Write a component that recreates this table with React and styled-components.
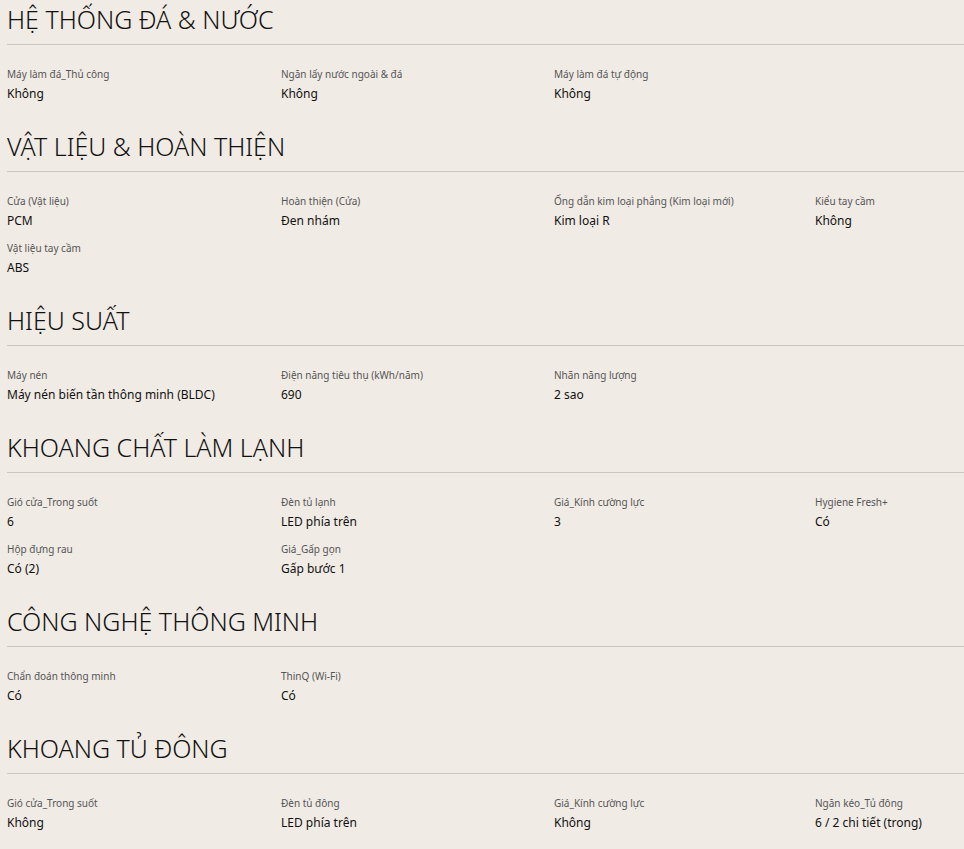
import React from "react"
import styled, { createGlobalStyle } from "styled-components"

const GlobalStyle = createGlobalStyle`
  html, body {
    margin: 0;
    padding: 0;
    background: #f0ebe5;
  }
  body {
    font-family: "Noto Sans", "Open Sans", sans-serif;
    color: #111;
  }`;

const Page = styled("div")`
  padding: 3px 0 20px 7px;
  background: #f0ebe5;
  min-height: 849px;
  box-sizing: border-box;`;

const Section = styled("section")`
  & + & {
    margin-top: 26px;
  }`;

const Title = styled("h2")`
  margin: 0;
  padding-bottom: 9px;
  border-bottom: 1px solid #c9c5c0;
  font-size: 25px;
  line-height: 32px;
  font-weight: 350;
  color: #111;`;

const Grid = styled("div")`
  display: grid;
  grid-template-columns: 274px 273px 261px 1fr;
  row-gap: 9px;
  padding-top: 21px;`;

const Item = styled("div")`
  display: flex;
  flex-direction: column;`;

const Label = styled("div")`
  font-size: 10px;
  line-height: 16px;
  color: #555;`;

const Value = styled("div")`
  margin-top: 2px;
  font-size: 12px;
  line-height: 20px;
  color: #111;`;

const sections = [
  {
    title: "HỆ THỐNG ĐÁ & NƯỚC",
    items: [
      ["Máy làm đá_Thủ công", "Không"],
      ["Ngăn lấy nước ngoài & đá", "Không"],
      ["Máy làm đá tự động", "Không"],
    ],
  },
  {
    title: "VẬT LIỆU & HOÀN THIỆN",
    items: [
      ["Cửa (Vật liệu)", "PCM"],
      ["Hoàn thiện (Cửa)", "Đen nhám"],
      ["Ống dẫn kim loại phẳng (Kim loại mới)", "Kim loại R"],
      ["Kiểu tay cầm", "Không"],
      ["Vật liệu tay cầm", "ABS"],
    ],
  },
  {
    title: "HIỆU SUẤT",
    items: [
      ["Máy nén", "Máy nén biến tần thông minh (BLDC)"],
      ["Điện năng tiêu thụ (kWh/năm)", "690"],
      ["Nhãn năng lượng", "2 sao"],
    ],
  },
  {
    title: "KHOANG CHẤT LÀM LẠNH",
    items: [
      ["Gió cửa_Trong suốt", "6"],
      ["Đèn tủ lạnh", "LED phía trên"],
      ["Giá_Kính cường lực", "3"],
      ["Hygiene Fresh+", "Có"],
      ["Hộp đựng rau", "Có (2)"],
      ["Giá_Gấp gọn", "Gấp bước 1"],
    ],
  },
  {
    title: "CÔNG NGHỆ THÔNG MINH",
    items: [
      ["Chẩn đoán thông minh", "Có"],
      ["ThinQ (Wi-Fi)", "Có"],
    ],
  },
  {
    title: "KHOANG TỦ ĐÔNG",
    items: [
      ["Gió cửa_Trong suốt", "Không"],
      ["Đèn tủ đông", "LED phía trên"],
      ["Giá_Kính cường lực", "Không"],
      ["Ngăn kéo_Tủ đông", "6 / 2 chi tiết (trong)"],
    ],
  },
];

export default function App() {
  return (
    <Page>
      <GlobalStyle />
      {sections.map(section => (
        <Section key={section.title}>
          <Title>{section.title}</Title>
          <Grid>
            {section.items.map(([label, value], i) => (
              <Item key={i}>
                <Label>{label}</Label>
                <Value>{value}</Value>
              </Item>
            ))}
          </Grid>
        </Section>
      ))}
    </Page>
  )
}
